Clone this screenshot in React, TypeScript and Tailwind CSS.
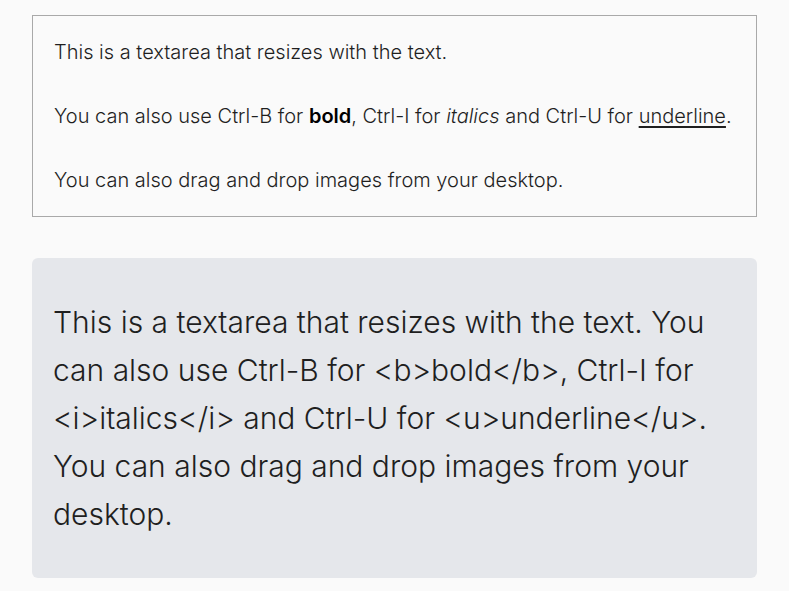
import React from 'react';

const App: React.FC = () => {
  return (
    <div
      className="min-h-screen bg-[#fafafa] px-8 pt-[15px] pb-4 text-[#1f1f1f] font-light"
      style={{ fontFamily: 'Inter, "Noto Sans", sans-serif' }}
    >
      {/* Rich text editor */}
      <div className="border border-[#a9a9a9] bg-[#fafafa] px-[21px] py-5 text-[20px] leading-[32px]">
        <p>This is a textarea that resizes with the text.</p>
        <br />
        <p>
          You can also use Ctrl-B for <b className="font-semibold text-black">bold</b>, Ctrl-I for{' '}
          <i>italics</i> and Ctrl-U for{' '}
          <u className="underline decoration-[1.5px] underline-offset-[3px]">underline</u>.
        </p>
        <br />
        <p>You can also drag and drop images from your desktop.</p>
      </div>

      {/* Raw output */}
      <div className="mt-[41px] rounded-md bg-[#e5e7eb] px-[21px] py-10 text-[30px] leading-[48px]">
        This is a textarea that resizes with the text. You can also use Ctrl-B for &lt;b&gt;bold&lt;/b&gt;,
        Ctrl-I for &lt;i&gt;italics&lt;/i&gt; and Ctrl-U for &lt;u&gt;underline&lt;/u&gt;. You can also drag
        and drop images from your desktop.
      </div>
    </div>
  );
};

export default App;
